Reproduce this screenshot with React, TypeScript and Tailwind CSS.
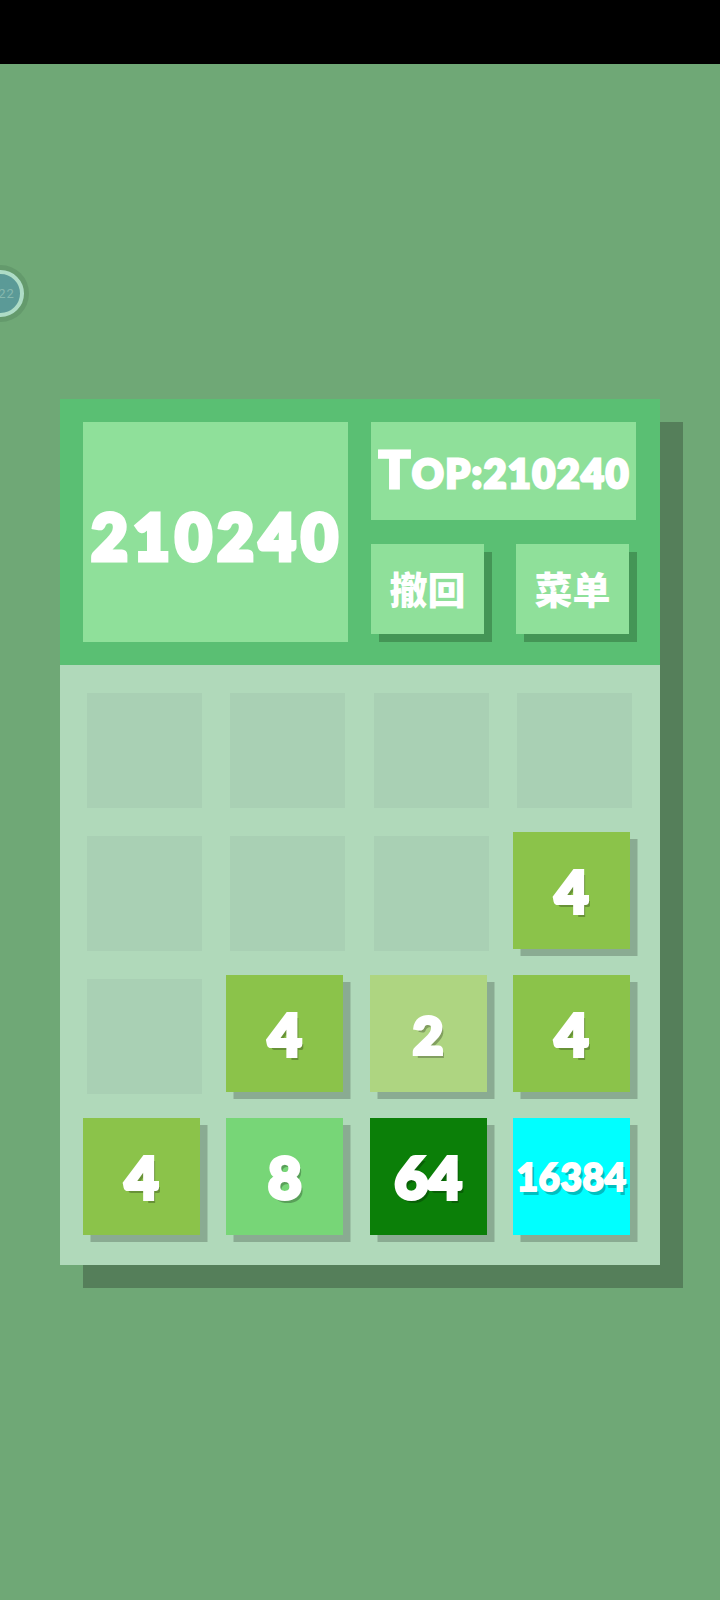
const font = "font-['Lato','Noto_Sans_CJK_SC',sans-serif]";

type TileProps = { value: string; bg: string; size: string };

function Tile({ value, bg, size }: TileProps) {
  return (
    <div
      className={`w-[117px] h-[117px] flex items-center justify-center text-white font-black [text-shadow:3px_4px_0_rgba(0,0,0,0.25)] shadow-[7.5px_7px_0_0_#8aab92] ${bg} ${size}`}
    >
      {value}
    </div>
  );
}

function Empty() {
  return <div className="ml-[4px] mt-[4px] w-[115px] h-[115px] bg-[#a9d0b4]" />;
}

const big = "text-[58px] [-webkit-text-stroke:4px_white]";

const rows: (TileProps | null)[][] = [
  [null, null, null, null],
  [null, null, null, { value: "4", bg: "bg-[#8bc34a]", size: big }],
  [
    null,
    { value: "4", bg: "bg-[#8bc34a]", size: big },
    { value: "2", bg: "bg-[#aed581]", size: "text-[52px] [-webkit-text-stroke:4px_white]" },
    { value: "4", bg: "bg-[#8bc34a]", size: big },
  ],
  [
    { value: "4", bg: "bg-[#8bc34a]", size: big },
    { value: "8", bg: "bg-[#77d677]", size: big },
    { value: "64", bg: "bg-[#0b7f08]", size: big },
    { value: "16384", bg: "bg-[#00ffff]", size: "text-[37px] tracking-[0.5px] [-webkit-text-stroke:2px_white]" },
  ],
];

export default function App() {
  return (
    <div className={`relative w-[720px] h-[1600px] overflow-hidden bg-[#6fa876] ${font}`}>
      <div className="h-[64px] bg-black" />

      <div className="absolute left-[-28px] top-[265px] w-[57px] h-[57px] rounded-full bg-[#649a6c] flex items-center justify-center">
        <div className="w-[47px] h-[47px] rounded-full bg-[#5b9a97] border-[4px] border-[#aedcc6] flex items-center justify-center">
          <span className="text-[13px] text-[#86b8ae] font-['Roboto',sans-serif] tracking-[1px] translate-x-[6px]">22</span>
        </div>
      </div>

      <div className="mt-[335px] ml-[60px] w-[600px] shadow-[23px_23px_0_0_#557f5a]">
        <div className="h-[266px] bg-[#5abf73] p-[23px] flex gap-[23px]">
          <div className="w-[265px] h-[220px] bg-[#8fe09a] flex items-center justify-center pt-[9px] pl-[4px] text-white font-black text-[62px] tracking-[6px] [-webkit-text-stroke:5px_white]">
            210240
          </div>
          <div className="w-[265px] flex flex-col gap-[24px]">
            <div className="h-[98px] bg-[#8fe09a] flex items-center justify-center pb-[6px] pl-[2px] text-white font-black [-webkit-text-stroke:3px_white] text-[39px] tracking-[1.8px] leading-none">
              <span>
                <span className="text-[52px]">T</span>OP:210240
              </span>
            </div>
            <div className="flex justify-between pr-[7px]">
              {["撤回", "菜单"].map((t) => (
                <div
                  key={t}
                  className="w-[113px] h-[90px] bg-[#8fe09a] shadow-[8px_8px_0_0_#449556] flex items-center justify-center pb-[4px] text-white font-black text-[38px] font-['Noto_Sans_CJK_SC',sans-serif]"
                >
                  {t}
                </div>
              ))}
            </div>
          </div>
        </div>

        <div className="h-[600px] bg-[#b0d9ba] pt-[23.5px] pl-[23px]">
          <div className="grid grid-cols-[repeat(4,143.33px)] auto-rows-[143.33px]">
            {rows.flat().map((c, i) => (
              <div key={i}>{c ? <Tile {...c} /> : <Empty />}</div>
            ))}
          </div>
        </div>
      </div>
    </div>
  );
}
